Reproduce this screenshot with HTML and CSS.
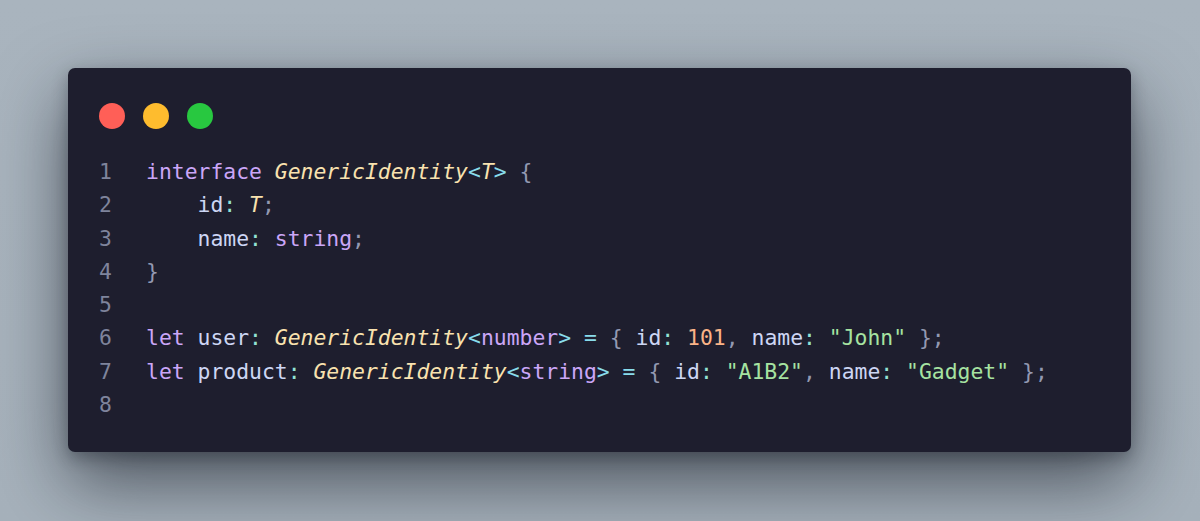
FILE: index.html
```html
<!DOCTYPE html>
<html lang="en">
<head>
<meta charset="utf-8">
<title>GenericIdentity</title>
<link rel="stylesheet" href="styles.css">
</head>
<body>
<div class="stage">
  <div class="window">
    <div class="dots">
      <span class="dot red"></span>
      <span class="dot yellow"></span>
      <span class="dot green"></span>
    </div>
    <div class="code">
      <div class="line"><span class="ln">1</span><span class="src"><span class="kw">interface</span> <span class="ty">GenericIdentity</span><span class="op">&lt;</span><span class="ty">T</span><span class="op">&gt;</span> <span class="br">{</span></span></div>
      <div class="line"><span class="ln">2</span><span class="src">    <span class="id">id</span><span class="pn">:</span> <span class="ty">T</span><span class="sc">;</span></span></div>
      <div class="line"><span class="ln">3</span><span class="src">    <span class="id">name</span><span class="pn">:</span> <span class="kw">string</span><span class="sc">;</span></span></div>
      <div class="line"><span class="ln">4</span><span class="src"><span class="br">}</span></span></div>
      <div class="line"><span class="ln">5</span><span class="src"></span></div>
      <div class="line"><span class="ln">6</span><span class="src"><span class="kw">let</span> <span class="id">user</span><span class="pn">:</span> <span class="ty">GenericIdentity</span><span class="op">&lt;</span><span class="kw">number</span><span class="op">&gt;</span> <span class="op">=</span> <span class="br">{</span> <span class="id">id</span><span class="pn">:</span> <span class="num">101</span><span class="sc">,</span> <span class="id">name</span><span class="pn">:</span> <span class="str">"John"</span> <span class="br">}</span><span class="sc">;</span></span></div>
      <div class="line"><span class="ln">7</span><span class="src"><span class="kw">let</span> <span class="id">product</span><span class="pn">:</span> <span class="ty">GenericIdentity</span><span class="op">&lt;</span><span class="kw">string</span><span class="op">&gt;</span> <span class="op">=</span> <span class="br">{</span> <span class="id">id</span><span class="pn">:</span> <span class="str">"A1B2"</span><span class="sc">,</span> <span class="id">name</span><span class="pn">:</span> <span class="str">"Gadget"</span> <span class="br">}</span><span class="sc">;</span></span></div>
      <div class="line"><span class="ln">8</span><span class="src"></span></div>
    </div>
  </div>
</div>
</body>
</html>
```

FILE: styles.css
```css
html, body {
  margin: 0;
  padding: 0;
}

body {
  width: 1200px;
  height: 521px;
  overflow: hidden;
  background: linear-gradient(180deg, #a9b4be 0%, #a6b1bb 100%);
}

.stage {
  box-sizing: border-box;
  height: 521px;
  padding: 68px 69px 69px 68px;
}

.window {
  box-sizing: border-box;
  height: 384px;
  background: #1e1e2e;
  border-radius: 7px;
  padding: 35px 31px 30px 31px;
  box-shadow: 0 30px 70px rgba(15, 20, 30, 0.6), 0 6px 16px rgba(15, 20, 30, 0.3);
}

.dots {
  display: flex;
  gap: 18px;
}

.dot {
  width: 26px;
  height: 26px;
  border-radius: 50%;
}

.red { background: #ff5f57; }
.yellow { background: #febc2e; }
.green { background: #28c840; }

.code {
  margin-top: 26px;
  font-family: "DejaVu Sans Mono", "Liberation Mono", monospace;
  font-size: 21.4px;
  line-height: 33.3px;
  color: #cdd6f4;
}

.line {
  display: flex;
  height: 33.3px;
}

.ln {
  width: 47px;
  flex: none;
  color: #7f849c;
}

.src {
  white-space: pre;
}

.kw { color: #cba6f7; }
.ty { color: #f9e2af; font-style: italic; }
.id { color: #cdd6f4; }
.pn { color: #94e2d5; }
.op { color: #89dceb; }
.br { color: #9399b2; }
.sc { color: #9399b2; }
.num { color: #fab387; }
.str { color: #a6e3a1; }
```
